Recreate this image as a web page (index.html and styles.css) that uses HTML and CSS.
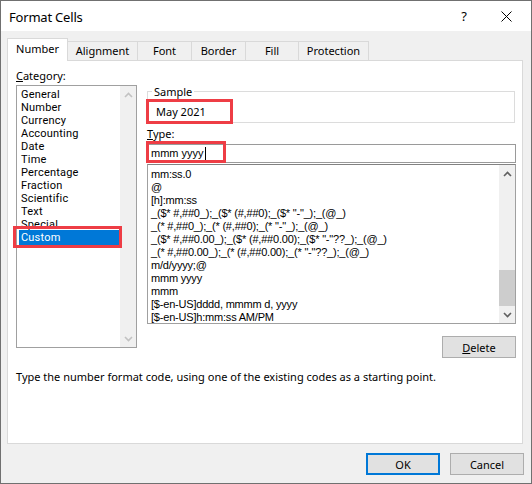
FILE: index.html
```html
<!DOCTYPE html>
<html>
<head>
<meta charset="utf-8">
<link rel="stylesheet" href="styles.css">
</head>
<body>
<div class="window">
  <div class="titlebar">
    <span class="title">Format Cells</span>
    <span class="help">?</span>
    <span class="close"><svg width="11" height="11" viewBox="0 0 11 11"><path d="M0.5 0.5 L10.5 10.5 M10.5 0.5 L0.5 10.5" stroke="#000" stroke-width="1" fill="none"/></svg></span>
  </div>
  <div class="body">
    <div class="tabs">
      <div class="tab active t-number">Number</div>
      <div class="tab t-align">Alignment</div>
      <div class="tab t-font">Font</div>
      <div class="tab t-border">Border</div>
      <div class="tab t-fill">Fill</div>
      <div class="tab t-prot">Protection</div>
    </div>
    <div class="panel">
      <div class="main">
        <div class="left">
          <div class="label"><u>C</u>ategory:</div>
          <div class="listbox cat">
            <div class="items">
              <div class="item">General</div>
              <div class="item">Number</div>
              <div class="item">Currency</div>
              <div class="item">Accounting</div>
              <div class="item">Date</div>
              <div class="item">Time</div>
              <div class="item">Percentage</div>
              <div class="item">Fraction</div>
              <div class="item">Scientific</div>
              <div class="item">Text</div>
              <div class="item">Special</div>
              <div class="item selected">Custom</div>
            </div>
            <div class="vscroll disabled">
              <div class="arrow"><svg width="9" height="6" viewBox="0 0 9 6"><polyline points="1,5 4.5,1.5 8,5" fill="none" stroke="currentColor" stroke-width="1.6"/></svg></div>
              <div class="track"></div>
              <div class="arrow"><svg width="9" height="6" viewBox="0 0 9 6"><polyline points="1,1 4.5,4.5 8,1" fill="none" stroke="currentColor" stroke-width="1.6"/></svg></div>
            </div>
          </div>
        </div>
        <div class="right">
          <fieldset class="sample">
            <legend>Sample</legend>
            <div class="sample-value">May 2021</div>
          </fieldset>
          <div class="label type-label"><u>T</u>ype:</div>
          <div class="type-input">mmm yyyy<span class="caret"></span></div>
          <div class="listbox fmt">
            <div class="items">
              <div class="fitem">mm:ss.0</div>
              <div class="fitem">@</div>
              <div class="fitem">[h]:mm:ss</div>
              <div class="fitem">_($* #,##0_);_($* (#,##0);_($* "-"_);_(@_)</div>
              <div class="fitem">_(* #,##0_);_(* (#,##0);_(* "-"_);_(@_)</div>
              <div class="fitem">_($* #,##0.00_);_($* (#,##0.00);_($* "-"??_);_(@_)</div>
              <div class="fitem">_(* #,##0.00_);_(* (#,##0.00);_(* "-"??_);_(@_)</div>
              <div class="fitem">m/d/yyyy;@</div>
              <div class="fitem">mmm yyyy</div>
              <div class="fitem">mmm</div>
              <div class="fitem">[$-en-US]dddd, mmmm d, yyyy</div>
              <div class="fitem">[$-en-US]h:mm:ss AM/PM</div>
            </div>
            <div class="vscroll">
              <div class="arrow"><svg width="9" height="6" viewBox="0 0 9 6"><polyline points="1,5 4.5,1.5 8,5" fill="none" stroke="currentColor" stroke-width="1.6"/></svg></div>
              <div class="track"><div class="thumb"></div></div>
              <div class="arrow"><svg width="9" height="6" viewBox="0 0 9 6"><polyline points="1,1 4.5,4.5 8,1" fill="none" stroke="currentColor" stroke-width="1.6"/></svg></div>
            </div>
          </div>
          <div class="delete-row"><button class="btn"><u>D</u>elete</button></div>
        </div>
      </div>
      <p class="desc">Type the number format code, using one of the existing codes as a starting point.</p>
    </div>
    <div class="buttons">
      <button class="btn default">OK</button>
      <button class="btn">Cancel</button>
    </div>
  </div>
  <div class="mark mark-sample"></div>
  <div class="mark mark-type"></div>
  <div class="mark mark-custom"></div>
</div>
</body>
</html>
```
FILE: styles.css
```css
html, body {
  margin: 0;
  padding: 0;
  background: #fff;
}
body {
  font-family: "Noto Sans", "Open Sans", sans-serif;
  font-size: 11px;
  color: #000;
}
.window {
  position: relative;
  width: 532px;
  height: 484px;
  box-sizing: border-box;
  border: 1px solid #707070;
  background: #f0f0f0;
  display: flex;
  flex-direction: column;
}
.titlebar {
  height: 30px;
  background: #fff;
  display: flex;
  align-items: center;
  padding: 0 6px 0 8px;
}
.title {
  flex: 1;
  font-size: 13px;
  letter-spacing: -0.2px;
  line-height: 20px;
  margin-top: 1px;
}
.help {
  width: 46px;
  text-align: center;
  font-size: 13px;
  line-height: 20px;
}
.close {
  width: 38px;
  display: flex;
  justify-content: center;
  align-items: center;
}
.close svg { display: block; }
.body {
  flex: 1;
  padding: 7px 8px 0 6px;
  display: flex;
  flex-direction: column;
}
.tabs {
  display: flex;
  align-items: flex-end;
  height: 22px;
}
.tab {
  box-sizing: border-box;
  height: 19px;
  border: 1px solid #d9d9d9;
  border-bottom: none;
  margin-left: -1px;
  text-align: center;
  line-height: 18px;
  background: #f0f0f0;
}
.tab.active {
  position: relative;
  z-index: 1;
  height: 23px;
  margin-bottom: -1px;
  margin-left: 0;
  background: #fff;
  line-height: 16px;
  padding-top: 2px;
}
.t-number { width: 61px; }
.t-align { width: 71px; }
.t-font { width: 55px; }
.t-border { width: 55px; }
.t-fill { width: 54px; }
.t-prot { width: 71px; }
.panel {
  box-sizing: border-box;
  width: 516px;
  height: 384px;
  background: #fff;
  border: 1px solid #d9d9d9;
  padding: 7px 0 0 8px;
}
.main {
  display: grid;
  grid-template-columns: 121px 368px;
  column-gap: 10px;
  align-items: start;
}
.label {
  height: 16px;
  line-height: 16px;
}
.left .label { margin-bottom: 1px; }
.listbox {
  box-sizing: border-box;
  border: 1px solid #a0a0a0;
  display: flex;
  background: #fff;
}
.listbox .items {
  flex: 1;
  overflow: hidden;
}
.cat {
  height: 263px;
}
.cat .items {
  padding: 2px 0 0 1px;
}
.item {
  height: 13px;
  line-height: 13px;
  padding-left: 3px;
  white-space: nowrap;
  font-family: Roboto, "Noto Sans", sans-serif;
  font-size: 11px;
  letter-spacing: 0.2px;
}
.item.selected {
  margin: -1px 0 -1px 1px;
  padding: 1px 0 1px 2px;
  background: #0078d7;
  color: #fff;
}
.vscroll {
  width: 16px;
  background: #f0f0f0;
  display: flex;
  flex-direction: column;
  color: #606060;
}
.vscroll.disabled { color: #c2c2c2; }
.arrow {
  height: 17px;
  display: flex;
  align-items: center;
  justify-content: center;
}
.arrow svg { display: block; }
.track {
  flex: 1;
  display: flex;
  flex-direction: column;
  justify-content: flex-end;
}
.thumb {
  height: 36px;
  background: #cdcdcd;
}
.right {
  display: flex;
  flex-direction: column;
}
.sample {
  box-sizing: border-box;
  margin: 16px 0 0 0;
  padding: 0 0 0 4px;
  height: 39px;
  width: 368px;
  border: 1px solid #dcdcdc;
  min-width: 0;
}
.sample legend {
  padding: 0 2px;
  line-height: 15px;
  height: 15px;
}
.sample-value {
  margin: 5px 0 0 4px;
  line-height: 16px;
}
.type-label { margin-top: 3px; }
.type-input {
  box-sizing: border-box;
  margin-top: 2px;
  height: 19px;
  width: 369px;
  border: 1px solid #9a9a9a;
  padding-left: 3px;
  font-family: "Liberation Sans", Arial, sans-serif;
  font-size: 11px;
  line-height: 17px;
  display: flex;
  align-items: center;
}
.caret {
  display: inline-block;
  width: 1px;
  height: 13px;
  background: #000;
  margin-left: 1px;
}
.fmt {
  margin-top: 1px;
  height: 160px;
  width: 369px;
  border-color: #a0a0a0;
  border-top-color: #828282;
}
.fmt .items {
  padding: 3px 0 0 3px;
}
.fitem {
  height: 13px;
  line-height: 13px;
  font-family: "Liberation Sans", Arial, sans-serif;
  font-size: 11px;
  letter-spacing: -0.2px;
  white-space: nowrap;
}
.delete-row {
  display: flex;
  justify-content: flex-end;
  margin-top: 12px;
  margin-right: -1px;
}
.btn {
  box-sizing: border-box;
  width: 74px;
  height: 22px;
  border: 1px solid #adadad;
  background: #e1e1e1;
  font-family: inherit;
  font-size: 11px;
  color: #000;
  padding: 0;
  margin: 0;
}
.btn.default {
  border: 2px solid #0078d7;
}
.desc {
  margin: 11px 0 0 0;
  line-height: 16px;
}
.buttons {
  display: flex;
  justify-content: flex-end;
  gap: 10px;
  margin-top: 9px;
  margin-right: -1px;
}
.mark {
  position: absolute;
  box-sizing: border-box;
  border: 3px solid #ee3d45;
}
.mark-sample { left: 145px; top: 98px; width: 87px; height: 25px; }
.mark-type { left: 145px; top: 140px; width: 80px; height: 22px; }
.mark-custom { left: 12px; top: 225px; width: 109px; height: 22px; }
```
